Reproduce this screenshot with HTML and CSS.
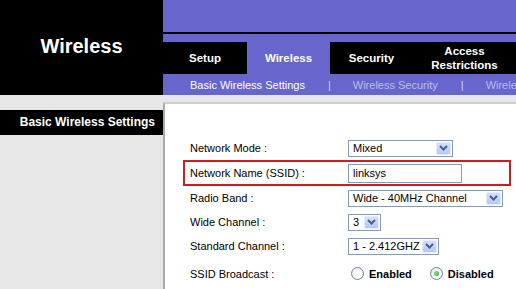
FILE: index.html
```html
<!DOCTYPE html>
<html>
<head>
<meta charset="utf-8">
<title>Wireless - Basic Wireless Settings</title>
<link rel="stylesheet" href="styles.css">
</head>
<body>
<div class="page">
  <header class="top">
    <div class="brand"><h1 class="brand-title">Wireless</h1></div>
    <div class="nav">
      <div class="nav-top"></div>
      <div class="nav-line"></div>
      <div class="nav-gap"></div>
      <ul class="tabs">
        <li class="tab">Setup</li>
        <li class="tab tab-active">Wireless</li>
        <li class="tab">Security</li>
        <li class="tab tab-two">Access<br>Restrictions</li>
      </ul>
      <div class="subnav">
        <span class="sub sub-active">Basic Wireless Settings</span>
        <span class="sep">|</span>
        <span class="sub">Wireless Security</span>
        <span class="sep">|</span>
        <span class="sub">Wireless MAC Filter</span>
      </div>
    </div>
  </header>
  <div class="main">
    <aside class="side">
      <div class="side-title">Basic Wireless Settings</div>
    </aside>
    <section class="content">
      <div class="panel">
        <div class="form">
          <div class="row">
            <span class="label">Network Mode :</span>
            <div class="select w-mode"><span class="select-value">Mixed</span><span class="arrow"><svg width="9" height="6" viewBox="0 0 9 6"><path d="M1 1 L4.5 4.5 L8 1" fill="none" stroke="#4a5f8a" stroke-width="2"/></svg></span></div>
          </div>
          <div class="row row-hl">
            <span class="label">Network Name (SSID) :</span>
            <div class="input">linksys</div>
          </div>
          <div class="row">
            <span class="label">Radio Band :</span>
            <div class="select w-band"><span class="select-value">Wide - 40MHz Channel</span><span class="arrow"><svg width="9" height="6" viewBox="0 0 9 6"><path d="M1 1 L4.5 4.5 L8 1" fill="none" stroke="#4a5f8a" stroke-width="2"/></svg></span></div>
          </div>
          <div class="row">
            <span class="label">Wide Channel :</span>
            <div class="select w-wide"><span class="select-value">3</span><span class="arrow"><svg width="9" height="6" viewBox="0 0 9 6"><path d="M1 1 L4.5 4.5 L8 1" fill="none" stroke="#4a5f8a" stroke-width="2"/></svg></span></div>
          </div>
          <div class="row">
            <span class="label">Standard Channel :</span>
            <div class="select w-std"><span class="select-value">1 - 2.412GHZ</span><span class="arrow"><svg width="9" height="6" viewBox="0 0 9 6"><path d="M1 1 L4.5 4.5 L8 1" fill="none" stroke="#4a5f8a" stroke-width="2"/></svg></span></div>
          </div>
          <div class="row row-radio">
            <span class="label">SSID Broadcast :</span>
            <div class="radios">
              <span class="radio"></span><span class="radio-label">Enabled</span>
              <span class="radio radio-on"></span><span class="radio-label">Disabled</span>
            </div>
          </div>
        </div>
      </div>
    </section>
  </div>
</div>
</body>
</html>
```

FILE: styles.css
```css
* { box-sizing: border-box; }

html, body {
  margin: 0;
  padding: 0;
  background: #ffffff;
}

body {
  font-family: "Liberation Sans", Arial, sans-serif;
  font-size: 11px;
  color: #000;
}

.page {
  width: 516px;
  height: 289px;
  overflow: hidden;
}

/* ---------- header ---------- */
.top {
  display: grid;
  grid-template-columns: 163px minmax(0, 1fr);
  height: 95px;
}

.brand {
  background: #000;
  text-align: center;
  padding-top: 35px;
}

.brand-title {
  margin: 0;
  color: #fff;
  font-size: 20px;
  line-height: 23px;
  font-weight: bold;
}

.nav {
  display: flex;
  flex-direction: column;
  background: #6666cc;
  min-width: 0;
  overflow: hidden;
}

.nav-top { height: 32px; }
.nav-line { height: 2px; background: #000; }
.nav-gap { height: 8px; }

.tabs {
  list-style: none;
  margin: 0;
  padding: 0;
  height: 32px;
  display: grid;
  grid-template-columns: 84px 83px 83px minmax(0, 1fr);
}

.tab {
  background: #000;
  color: #fff;
  font-weight: bold;
  font-size: 11.5px;
  display: flex;
  align-items: center;
  justify-content: center;
  text-align: center;
  line-height: 14px;
}

.tab-active { background: #6666cc; }

.subnav {
  height: 21px;
  display: flex;
  align-items: center;
  padding-left: 27px;
  white-space: nowrap;
  color: #bdbdee;
  font-size: 11px;
}

.sub-active { color: #fff; }

.sep {
  margin: 0 22px 0 23px;
  color: #d4d4f4;
}

/* ---------- main ---------- */
.main {
  display: grid;
  grid-template-columns: 163px minmax(0, 1fr);
  height: 194px;
  background: #e6e6e6;
}

.side {
  padding-top: 15px;
}

.side-title {
  background: #000;
  color: #fff;
  height: 25px;
  line-height: 25px;
  font-weight: bold;
  font-size: 12px;
  text-align: right;
  padding-right: 8px;
  white-space: nowrap;
}

.content {
  padding-top: 7px;
  min-width: 0;
}

.panel {
  height: 100%;
  background: #fff;
  border-top: 2px solid #cfcfcf;
  border-left: 2px solid #ababab;
  padding-top: 32px;
}

.form {
  margin-left: 18px;
  width: 328px;
}

.row {
  display: flex;
  align-items: center;
  height: 24px;
  padding-left: 7px;
}

.row-hl {
  height: 26px;
  box-shadow: inset 0 0 0 2px #d01c1c;
}

.row-radio {
  height: 28px;
  padding-top: 3px;
}

.label {
  width: 158px;
  flex: none;
  white-space: nowrap;
}

.select {
  height: 17px;
  border: 1px solid #7f9db9;
  background: #fff;
  display: flex;
  align-items: center;
  justify-content: space-between;
  padding-left: 4px;
  white-space: nowrap;
}

.select-value { line-height: 15px; }

.arrow {
  width: 15px;
  height: 13px;
  margin: 1px;
  border: 1px solid #e4ebfd;
  border-radius: 2px;
  background: linear-gradient(#d3e0fd, #b5c8f5);
  display: flex;
  align-items: center;
  justify-content: center;
}

.w-mode { width: 105px; }
.w-band { width: 155px; }
.w-wide { width: 33px; }
.w-std { width: 91px; }

.input {
  width: 114px;
  height: 19px;
  border: 1px solid #7f9db9;
  padding-left: 4px;
  line-height: 17px;
}

.radios {
  display: flex;
  align-items: center;
  padding-left: 3px;
}

.radio {
  width: 13px;
  height: 13px;
  border-radius: 50%;
  border: 1px solid #6f85a3;
  background: radial-gradient(circle at 60% 60%, #ffffff 30%, #dcdcd4 100%);
  display: flex;
  align-items: center;
  justify-content: center;
  margin-right: 5px;
}

.radio-on::after {
  content: "";
  width: 5px;
  height: 5px;
  border-radius: 50%;
  background: radial-gradient(circle at 40% 40%, #8fe08f, #22a022);
}

.radio-label {
  font-weight: bold;
  font-size: 11px;
  margin-right: 18px;
}
```
